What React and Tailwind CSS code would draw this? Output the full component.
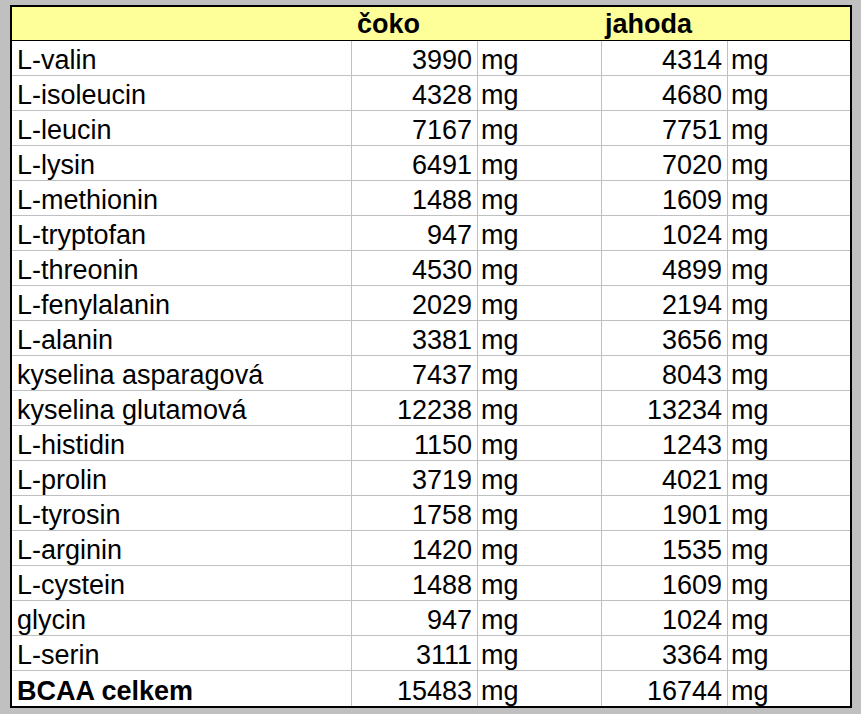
const rows = [
  ['L-valin', 3990, 4314],
  ['L-isoleucin', 4328, 4680],
  ['L-leucin', 7167, 7751],
  ['L-lysin', 6491, 7020],
  ['L-methionin', 1488, 1609],
  ['L-tryptofan', 947, 1024],
  ['L-threonin', 4530, 4899],
  ['L-fenylalanin', 2029, 2194],
  ['L-alanin', 3381, 3656],
  ['kyselina asparagová', 7437, 8043],
  ['kyselina glutamová', 12238, 13234],
  ['L-histidin', 1150, 1243],
  ['L-prolin', 3719, 4021],
  ['L-tyrosin', 1758, 1901],
  ['L-arginin', 1420, 1535],
  ['L-cystein', 1488, 1609],
  ['glycin', 947, 1024],
  ['L-serin', 3111, 3364],
  ['BCAA celkem', 15483, 16744, true],
]

const cols = 'grid grid-cols-[340px_126px_124px_126px_122px]'

function Row({ name, a, b, bold, last }) {
  const cell = `${last ? 'h-[35px]' : 'h-[34px]'} flex items-end leading-[30px]`
  const line = last ? '' : 'border-b border-[#c0c0c0]'
  return (
    <div className={`${cols} ${line}`}>
      <div className={`${cell} pl-[5px] border-r border-[#c0c0c0] ${bold ? 'font-bold' : ''}`}>{name}</div>
      <div className={`${cell} justify-end pr-[5px] border-r border-[#c0c0c0]`}>{a}</div>
      <div className={`${cell} pl-[3px] border-r border-[#c0c0c0]`}>mg</div>
      <div className={`${cell} justify-end pr-[5px] border-r border-[#c0c0c0]`}>{b}</div>
      <div className={`${cell} pl-[3px]`}>mg</div>
    </div>
  )
}

export default function App() {
  return (
    <div className="w-[861px] h-[714px] bg-[#c0c0c0] pt-[5px] pl-[10px] font-['Liberation_Sans',Arial,sans-serif] text-[27px] text-black">
      <div className="w-[842px] border-2 border-black bg-white">
        <div className={`${cols} bg-[#ffff99] border-b border-black h-[34px] font-bold`}>
          <div />
          <div className="flex items-end pb-[1px] leading-[30px] pl-[5px] col-span-2">čoko</div>
          <div className="flex items-end pb-[1px] leading-[30px] pl-[3px] col-span-2">jahoda</div>
        </div>
        {rows.map((r, i) => (
          <Row key={r[0]} name={r[0]} a={r[1]} b={r[2]} bold={r[3]} last={i === rows.length - 1} />
        ))}
      </div>
    </div>
  )
}
